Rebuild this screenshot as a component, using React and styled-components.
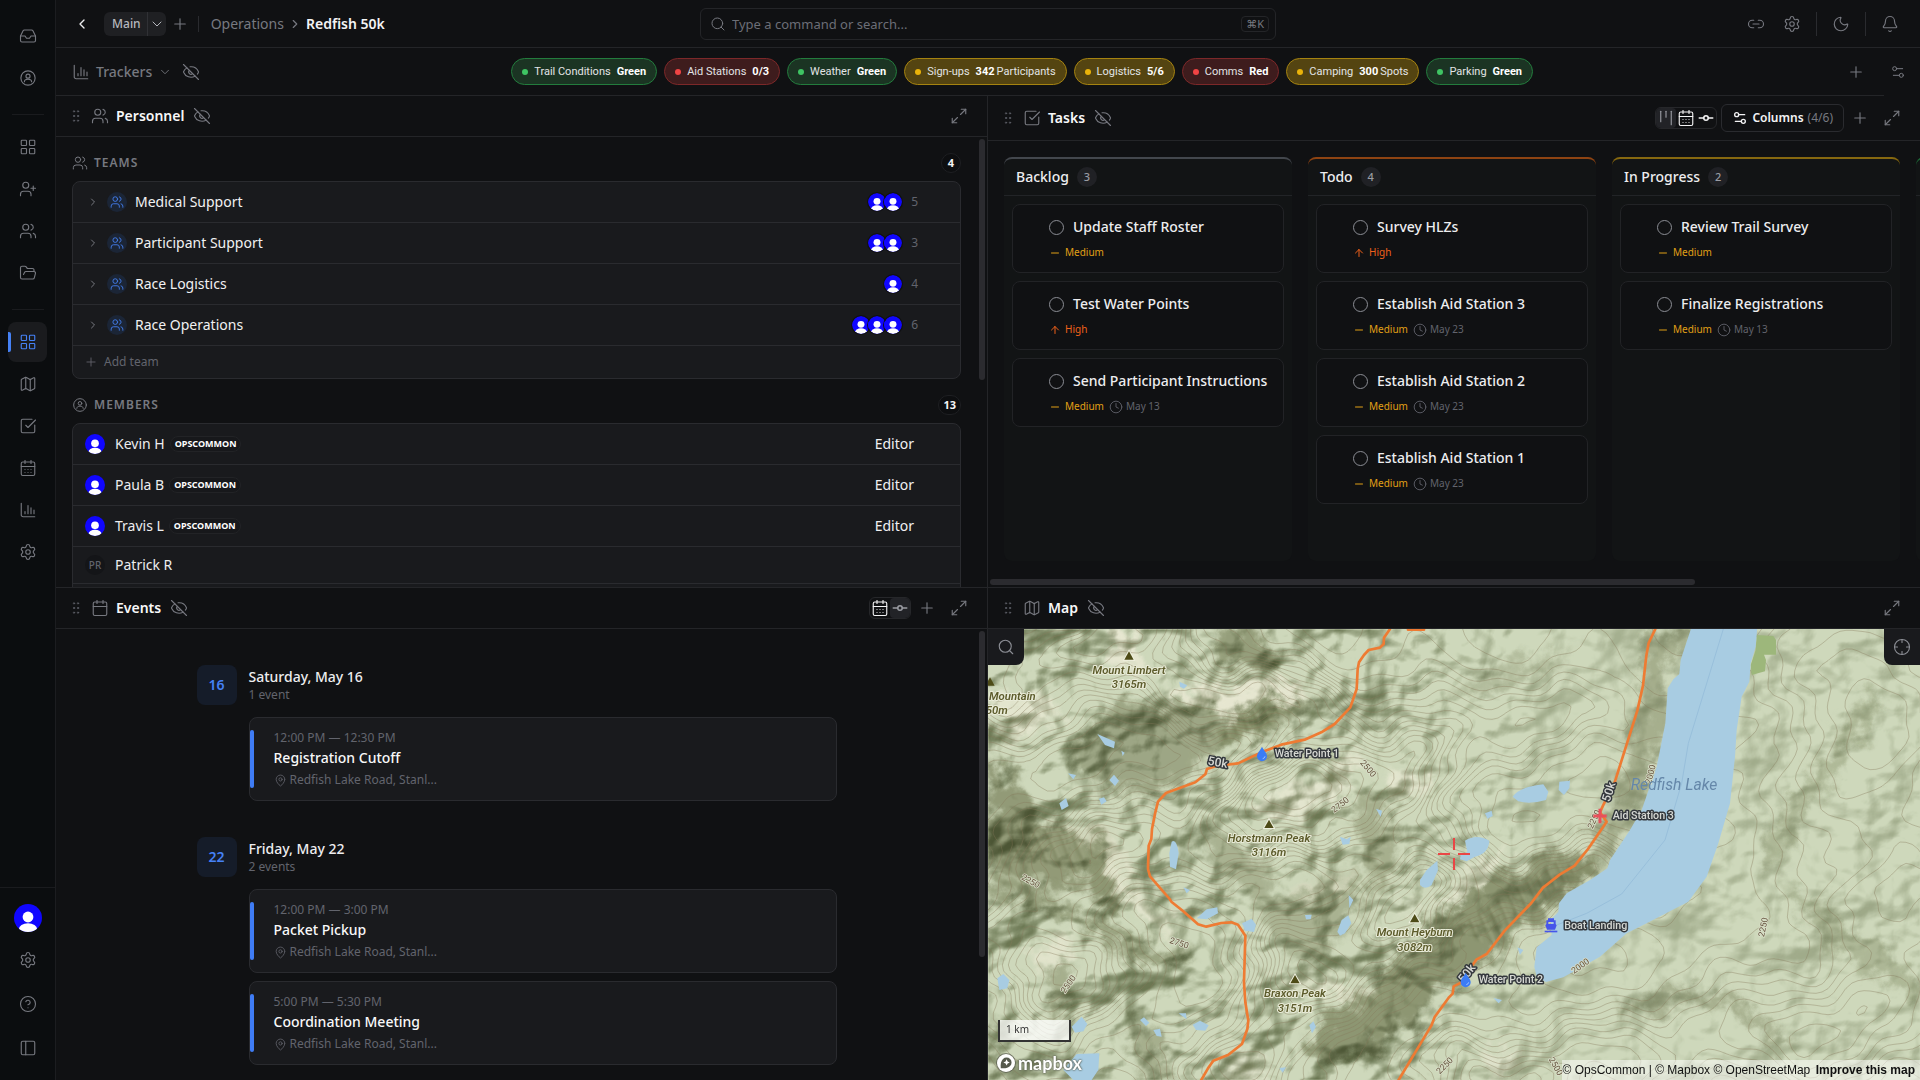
import styled, { createGlobalStyle, css } from 'styled-components';
import {
    ArrowUp, Bell, Calendar, CalendarDays, ChevronDown, ChevronLeft, ChevronRight, CircleHelp, Clock, Crosshair,
    EyeOff, FolderOpen, GitCommitHorizontal, GripVertical, Inbox, Kanban, LayoutGrid, Link2, Map, MapPin, Maximize2,
    Minus, Moon, PanelLeft, Plus, Search, Settings, Settings2, SquareCheckBig, UserPlus, Users,
} from 'lucide-react';

const GlobalStyle = createGlobalStyle`
    * { box-sizing: border-box; }
    body {
        margin: 0;
        background: #101113;
        color: #ededef;
        font-family: 'Noto Sans', 'Liberation Sans', sans-serif;
        font-size: 14px;
        line-height: 20px;
    }
    button, input { font: inherit; color: inherit; }
    a { color: inherit; text-decoration: none; }
    h1, h2, h3, p, ul { margin: 0; padding: 0; font: inherit; }
    ul { list-style: none; }
    svg { display: block; flex-shrink: 0; }
`

const CircleUser = ({ size = 18 }) => (
    <svg width={size} height={size} viewBox="0 0 24 24" fill="none" stroke="currentColor" strokeWidth="1.5" strokeLinecap="round">
        <circle cx="12" cy="12" r="9.500" />
        <circle cx="12" cy="9.500" r="2.700" />
        <path d="M7.200 17c0-2.200 2-3.300 4.800-3.300s4.800 1.100 4.800 3.300" />
    </svg>
)

const ChartIcon = ({ size = 18 }) => (
    <svg width={size} height={size} viewBox="0 0 24 24" fill="none" stroke="currentColor" strokeWidth="1.5" strokeLinecap="round">
        <path d="M3 3v15.500A2.500 2.500 0 0 0 5.500 21H21M8 17v-3M12 17V6M16 17V9M20 17v-5" />
    </svg>
)

const Avatar = ({ size = 20 }) => (
    <svg width={size} height={size} viewBox="0 0 28 28" role="img" aria-label="avatar">
        <clipPath id={'avatar' + size}><circle cx="14" cy="14" r="14" /></clipPath>
        <g clipPath={`url(#avatar${size})`}>
            <rect width="28" height="28" fill="#1006ff" />
            <circle cx="14" cy="13" r="5.400" fill="#fff" />
            <ellipse cx="14" cy="25.500" rx="9.200" ry="6.300" fill="#fff" />
        </g>
    </svg>
)

const ICON = { size: 18, strokeWidth: 1.5 };

/* ---------- sidebar ---------- */

const PROJECT_LINKS = [
    { label: 'Overview', icon: LayoutGrid, active: true },
    { label: 'Map', icon: Map },
    { label: 'Tasks', icon: SquareCheckBig },
    { label: 'Calendar', icon: CalendarDays },
    { label: 'Trackers', icon: ChartIcon },
    { label: 'Settings', icon: Settings },
];
const ORG_LINKS = [
    { label: 'Dashboard', icon: LayoutGrid },
    { label: 'Invite', icon: UserPlus },
    { label: 'People', icon: Users },
    { label: 'Files', icon: FolderOpen },
];
const TOP_LINKS = [
    { label: 'Inbox', icon: Inbox },
    { label: 'Profile', icon: CircleUser },
];

const NavGroup = ({ links }) => (
    <NavList>
        {links.map(({ label, icon: Icon, active }) => (
            <li key={label}>
                <NavLink href="#" aria-label={label} $active={active}><Icon {...ICON} /></NavLink>
            </li>
        ))}
    </NavList>
)

const Sidebar = () => (
    <SidebarStyle>
        <NavGroup links={TOP_LINKS} />
        <NavDivider />
        <NavGroup links={ORG_LINKS} />
        <NavDivider />
        <NavGroup links={PROJECT_LINKS} />
        <SidebarFooter>
            <AccountLink href="#" aria-label="Account"><Avatar size={28} /></AccountLink>
            <NavLink href="#" aria-label="Preferences"><Settings {...ICON} /></NavLink>
            <NavLink href="#" aria-label="Help"><CircleHelp {...ICON} /></NavLink>
            <NavLink href="#" aria-label="Toggle sidebar"><PanelLeft {...ICON} /></NavLink>
        </SidebarFooter>
    </SidebarStyle>
)

/* ---------- top bars ---------- */

const TopBar = () => (
    <TopBarStyle>
        <TopLeft>
            <IconButton aria-label="Back" $bright><ChevronLeft size={16} strokeWidth={2} /></IconButton>
            <ViewPicker>
                <button>Main</button>
                <button aria-label="Choose view"><ChevronDown size={16} strokeWidth={1.5} /></button>
            </ViewPicker>
            <IconButton aria-label="Add view"><Plus {...ICON} /></IconButton>
            <Rule />
            <Crumbs aria-label="Breadcrumb">
                <a href="#">Operations</a>
                <ChevronRight size={14} strokeWidth={2} />
                <h1>Redfish 50k</h1>
            </Crumbs>
        </TopLeft>
        <SearchBox>
            <Search size={16} strokeWidth={1.5} />
            <input type="text" aria-label="Search" placeholder="Type a command or search..." />
            <kbd>⌘K</kbd>
        </SearchBox>
        <TopRight>
            <IconButton aria-label="Copy link"><Link2 {...ICON} /></IconButton>
            <IconButton aria-label="Settings"><Settings {...ICON} /></IconButton>
            <Rule $tall />
            <IconButton aria-label="Theme"><Moon {...ICON} /></IconButton>
            <Rule $tall />
            <IconButton aria-label="Notifications"><Bell {...ICON} /></IconButton>
        </TopRight>
    </TopBarStyle>
)

const TRACKERS = [
    { label: 'Trail Conditions', value: 'Green', tone: 'green' },
    { label: 'Aid Stations', value: '0/3', tone: 'red' },
    { label: 'Weather', value: 'Green', tone: 'green' },
    { label: 'Sign-ups', value: '342', unit: 'Participants', tone: 'yellow' },
    { label: 'Logistics', value: '5/6', tone: 'yellow' },
    { label: 'Comms', value: 'Red', tone: 'red' },
    { label: 'Camping', value: '300', unit: 'Spots', tone: 'yellow' },
    { label: 'Parking', value: 'Green', tone: 'green' },
];

const TrackerBar = () => (
    <TrackerRow>
        <TrackerMain>
            <TrackerTitle>
                <ChartIcon />
                <h2>Trackers</h2>
                <ChevronDown size={14} strokeWidth={1.5} />
                <EyeOff {...ICON} />
            </TrackerTitle>
            <Pills>
                {TRACKERS.map((t) => (
                    <Pill key={t.label} $tone={t.tone}>
                        <span>{t.label}</span>
                        <PillValue><b>{t.value}</b>{t.unit && <span>{t.unit}</span>}</PillValue>
                    </Pill>
                ))}
            </Pills>
            <IconButton aria-label="Add tracker"><Plus {...ICON} /></IconButton>
        </TrackerMain>
        <TrackerSettings aria-label="Layout settings"><Settings2 size={16} strokeWidth={1.5} /></TrackerSettings>
    </TrackerRow>
)

/* ---------- panels ---------- */

const Panel = ({ title, icon: Icon, tall, actions, children }) => (
    <PanelStyle>
        <PanelHeader $tall={tall}>
            <Grip><GripVertical size={16} strokeWidth={1.5} /></Grip>
            <Icon {...ICON} />
            <h2>{title}</h2>
            <EyeOff {...ICON} />
            <PanelActions>
                {actions}
                <IconButton aria-label={'Expand ' + title}><Maximize2 {...ICON} /></IconButton>
            </PanelActions>
        </PanelHeader>
        {children}
    </PanelStyle>
)

const TEAMS = [
    { name: 'Medical Support', avatars: 2, count: 5 },
    { name: 'Participant Support', avatars: 2, count: 3 },
    { name: 'Race Logistics', avatars: 1, count: 4 },
    { name: 'Race Operations', avatars: 3, count: 6 },
];
const MEMBERS = [
    { name: 'Kevin H', org: 'OPSCOMMON', role: 'Editor' },
    { name: 'Paula B', org: 'OPSCOMMON', role: 'Editor' },
    { name: 'Travis L', org: 'OPSCOMMON', role: 'Editor' },
    { name: 'Patrick R', initials: 'PR' },
];

const Personnel = () => (
    <Panel title="Personnel" icon={Users}>
        <ScrollArea>
            <PeopleContent>
                <SectionHead><Users size={16} strokeWidth={1.5} /><h3>TEAMS</h3><Count>4</Count></SectionHead>
                <List>
                    {TEAMS.map((t) => (
                        <TeamRow key={t.name}>
                            <ChevronRight size={12} strokeWidth={2} />
                            <TeamIcon><Users size={14} strokeWidth={1.5} /></TeamIcon>
                            <span>{t.name}</span>
                            <AvatarStack>
                                {Array.from({ length: t.avatars }, (_, i) => <Avatar key={i} size={18} />)}
                            </AvatarStack>
                            <small>{t.count}</small>
                        </TeamRow>
                    ))}
                    <li><AddTeam><Plus size={14} strokeWidth={1.5} />Add team</AddTeam></li>
                </List>
                <SectionHead><CircleUser size={16} /><h3>MEMBERS</h3><Count>13</Count></SectionHead>
                <List>
                    {MEMBERS.map((m) => (
                        <MemberRow key={m.name} $short={!m.org}>
                            {m.initials ? <Initials>{m.initials}</Initials> : <Avatar />}
                            <span>{m.name}</span>
                            {m.org && <OrgBadge>{m.org}</OrgBadge>}
                            {m.role && <Role>{m.role}</Role>}
                        </MemberRow>
                    ))}
                    <MemberRow $short />
                </List>
            </PeopleContent>
            <Track><Thumb $size={54} /></Track>
        </ScrollArea>
    </Panel>
)

const COLUMNS = [
    {
        name: 'Backlog', color: '#43474d', tasks: [
            { title: 'Update Staff Roster', priority: 'Medium' },
            { title: 'Test Water Points', priority: 'High' },
            { title: 'Send Participant Instructions', priority: 'Medium', due: 'May 13' },
        ],
    },
    {
        name: 'Todo', color: '#8e4312', tasks: [
            { title: 'Survey HLZs', priority: 'High' },
            { title: 'Establish Aid Station 3', priority: 'Medium', due: 'May 23' },
            { title: 'Establish Aid Station 2', priority: 'Medium', due: 'May 23' },
            { title: 'Establish Aid Station 1', priority: 'Medium', due: 'May 23' },
        ],
    },
    {
        name: 'In Progress', color: '#86680f', tasks: [
            { title: 'Review Trail Survey', priority: 'Medium' },
            { title: 'Finalize Registrations', priority: 'Medium', due: 'May 13' },
        ],
    },
    { color: '#1d6b38', tasks: [] },
];

const TaskCard = ({ title, priority, due }) => (
    <Card>
        <CardTitle>
            <input type="checkbox" aria-label={'Complete ' + title} />
            <h3>{title}</h3>
        </CardTitle>
        <CardMeta>
            <Priority $high={priority === 'High'}>
                {priority === 'High' ? <ArrowUp size={12} strokeWidth={2} /> : <Minus size={12} strokeWidth={2} />}
                {priority}
            </Priority>
            {due && <Due><Clock size={14} strokeWidth={1.5} />{due}</Due>}
        </CardMeta>
    </Card>
)

const Tasks = () => (
    <Panel
        title="Tasks"
        icon={SquareCheckBig}
        tall
        actions={<>
            <Segmented>
                <Segment aria-label="Board" $on><Kanban size={18} strokeWidth={1.5} /></Segment>
                <Segment aria-label="Calendar"><CalendarDays size={18} strokeWidth={1.5} /></Segment>
                <Segment aria-label="Timeline"><GitCommitHorizontal size={18} strokeWidth={2} /></Segment>
            </Segmented>
            <ColumnsButton><Settings2 size={16} strokeWidth={2} />Columns <span>(4/6)</span></ColumnsButton>
            <IconButton aria-label="Add task"><Plus {...ICON} /></IconButton>
        </>}
    >
        <Board>
            {COLUMNS.map((c) => (
                <Column key={c.color} $color={c.color}>
                    <ColumnHead>
                        {c.name && <><h3>{c.name}</h3><ColumnCount>{c.tasks.length}</ColumnCount></>}
                    </ColumnHead>
                    <Cards>{c.tasks.map((t) => <TaskCard key={t.title} {...t} />)}</Cards>
                </Column>
            ))}
        </Board>
        <Track $horizontal><Thumb $horizontal $size={76} /></Track>
    </Panel>
)

const DAYS = [
    {
        day: 16, title: 'Saturday, May 16', note: '1 event', events: [
            { time: '12:00 PM — 12:30 PM', name: 'Registration Cutoff' },
        ],
    },
    {
        day: 22, title: 'Friday, May 22', note: '2 events', events: [
            { time: '12:00 PM — 3:00 PM', name: 'Packet Pickup' },
            { time: '5:00 PM — 5:30 PM', name: 'Coordination Meeting' },
        ],
    },
];

const Events = () => (
    <Panel
        title="Events"
        icon={Calendar}
        actions={<>
            <Segmented>
                <Segment aria-label="Calendar"><CalendarDays size={18} strokeWidth={1.5} /></Segment>
                <Segment aria-label="Timeline" $on><GitCommitHorizontal size={18} strokeWidth={2} /></Segment>
            </Segmented>
            <IconButton aria-label="Add event"><Plus {...ICON} /></IconButton>
        </>}
    >
        <ScrollArea>
            <Timeline>
                {DAYS.map((d) => (
                    <Day key={d.day}>
                        <DayBadge>{d.day}</DayBadge>
                        <DayBody>
                            <DayHead><h3>{d.title}</h3><p>{d.note}</p></DayHead>
                            {d.events.map((e) => (
                                <EventCard key={e.name}>
                                    <p>{e.time}</p>
                                    <h3>{e.name}</h3>
                                    <p><MapPin size={13} strokeWidth={1.5} />Redfish Lake Road, Stanl...</p>
                                </EventCard>
                            ))}
                        </DayBody>
                    </Day>
                ))}
            </Timeline>
            <Track><Thumb $size={73} /></Track>
        </ScrollArea>
    </Panel>
)

/* ---------- map ---------- */

const MAP_W = 2796;
const MAP_H = 1353;

// x, y, height, spread x, spread y
const SUMMITS = [
    [400, 30, 9, 260, 150], [0, 180, 8, 200, 200], [740, 210, 8, 330, 110], [860, 560, 11, 260, 180],
    [1060, 420, 7, 170, 150], [1290, 430, 7, 150, 170], [1270, 860, 10, 200, 190], [930, 1040, 9, 200, 190],
    [330, 660, 8, 280, 150], [190, 1020, 9, 230, 200], [760, 1330, 7, 240, 150], [1560, 1360, 8, 250, 160],
    [1720, 760, 6, 340, 100], [1650, 260, 4, 300, 120], [2640, 250, 5, 330, 520], [2500, 1200, 6, 420, 190],
    [1940, 1280, 4, 200, 130], [2760, 830, 4, 240, 200],
];

const elevation = (x, y) => {
    const wx = x + 30 * Math.sin(y / 61) + 16 * Math.sin(y / 23 + x / 47);
    const wy = y + 30 * Math.sin(x / 73 + 2) + 14 * Math.cos(x / 29 - y / 53);
    return SUMMITS.reduce(
        (sum, [px, py, h, sx, sy]) => sum + h * Math.exp(-(((wx - px) / sx) ** 2) - ((wy - py) / sy) ** 2),
        0.5 * Math.sin(x / 90) * Math.cos(y / 110)
    );
};

// marching squares over the elevation grid
const buildContours = (step, interval) => {
    const cols = Math.ceil(MAP_W / step) + 1;
    const rows = Math.ceil(MAP_H / step) + 1;
    const grid = Array.from({ length: rows }, (_, r) => Array.from({ length: cols }, (_, c) => elevation(c * step, r * step)));
    let d = '';
    for (let r = 0; r < rows - 1; r++) {
        for (let c = 0; c < cols - 1; c++) {
            const corners = [[c, r], [c + 1, r], [c + 1, r + 1], [c, r + 1]];
            const heights = corners.map(([i, j]) => grid[j][i]);
            const first = Math.ceil(Math.min(...heights) / interval);
            const last = Math.floor(Math.max(...heights) / interval);
            for (let n = first; n <= last; n++) {
                const level = n * interval;
                const hits = [];
                for (let e = 0; e < 4; e++) {
                    const a = heights[e];
                    const b = heights[(e + 1) % 4];
                    if ((a < level) === (b < level)) continue;
                    const t = (level - a) / (b - a);
                    const [x1, y1] = corners[e];
                    const [x2, y2] = corners[(e + 1) % 4];
                    hits.push(`${Math.round((x1 + (x2 - x1) * t) * step)} ${Math.round((y1 + (y2 - y1) * t) * step)}`);
                }
                if (hits.length >= 2) d += `M${hits[0]}L${hits[1]}`;
                if (hits.length === 4) d += `M${hits[2]}L${hits[3]}`;
            }
        }
    }
    return d;
};

const CONTOURS = buildContours(18, 0.6);

const PEAKS = [
    { name: 'Mount Limbert', height: '3165m', x: 423, y: 82 },
    { name: 'Horstmann Peak', height: '3116m', x: 843, y: 587 },
    { name: 'Mount Heyburn', height: '3082m', x: 1280, y: 870 },
    { name: 'Braxon Peak', height: '3151m', x: 921, y: 1053 },
];
const CONTOUR_LABELS = [
    { text: '2500', x: 1134, y: 424, angle: 50 }, { text: '2750', x: 1062, y: 534, angle: -38 },
    { text: '2250', x: 124, y: 764, angle: 28 }, { text: '2750', x: 571, y: 950, angle: 18 },
    { text: '2500', x: 248, y: 1070, angle: -55 }, { text: '2250', x: 1376, y: 1316, angle: -45 },
    { text: '2000', x: 1996, y: 438, angle: -75 }, { text: '2000', x: 1782, y: 1018, angle: -35 },
    { text: '2250', x: 2334, y: 896, angle: -78 }, { text: '2250', x: 1826, y: 574, angle: -65 },
    { text: '2500', x: 1696, y: 1316, angle: 60 },
];
const PLACES = [
    { name: 'Water Point 1', x: 860, y: 383 },
    { name: 'Aid Station 3', x: 1874, y: 570 },
    { name: 'Boat Landing', x: 1729, y: 901 },
    { name: 'Water Point 2', x: 1472, y: 1061 },
];

const Drop = ({ x, y }) => (
    <g transform={`translate(${x} ${y})`}>
        <path d="M0-22C6-10 15-3 15 7A15 15 0 0 1-15 7C-15-3-6-10 0-22Z" fill="#3b7cf6" />
        <path d="M2 14q6-1 7-7" fill="none" stroke="#9dc0ff" strokeWidth="3" />
    </g>
)

const MapView = () => (
    <MapSvg viewBox={`0 0 ${MAP_W} ${MAP_H}`} preserveAspectRatio="xMidYMid slice" role="img" aria-label="Course map">
        <defs>
            <filter id="relief" x="0" y="0" width="100%" height="100%" colorInterpolationFilters="sRGB">
                <feTurbulence type="fractalNoise" baseFrequency="0.0035 0.0045" numOctaves="4" seed="23" />
                <feDiffuseLighting surfaceScale="120" diffuseConstant="1.2" lightingColor="#fff">
                    <feDistantLight azimuth="225" elevation="56" />
                </feDiffuseLighting>
                <feColorMatrix values="0.62 0 0 0 0.4  0.58 0 0 0 0.44  0.72 0 0 0 0.3  0 0 0 1 0" />
            </filter>
            <filter id="rugged" x="-10%" y="-10%" width="120%" height="120%" colorInterpolationFilters="sRGB">
                <feTurbulence type="fractalNoise" baseFrequency="0.016" numOctaves="4" seed="4" result="n" />
                <feGaussianBlur in="SourceGraphic" stdDeviation="12" result="b" />
                <feDisplacementMap in="b" in2="n" scale="120" xChannelSelector="R" yChannelSelector="G" />
            </filter>
            <linearGradient id="westward" x1="0" x2="1" y1="0" y2="0">
                <stop offset="0.45" stopColor="#fff" stopOpacity="0.8" />
                <stop offset="0.62" stopColor="#fff" stopOpacity="0.32" />
                <stop offset="1" stopColor="#fff" stopOpacity="0.4" />
            </linearGradient>
            <mask id="reliefMask"><rect width={MAP_W} height={MAP_H} fill="url(#westward)" /></mask>
            <pattern id="gullies" width="34" height="120" patternUnits="userSpaceOnUse" patternTransform="rotate(-24)">
                <path d="M8 0q10 60 0 120" stroke="#59603a" strokeWidth="9" fill="none" opacity="0.5" />
                <path d="M22 0q-6 60 0 120" stroke="#d6dab8" strokeWidth="5" fill="none" opacity="0.35" />
            </pattern>
            <filter id="soft"><feGaussianBlur stdDeviation="3" /></filter>
        </defs>
        <rect width={MAP_W} height={MAP_H} fill="#ced8bb" />
        <g filter="url(#rugged)">
            <g fill="#7d8660">
                <path opacity="0.7" d="M656 3H816L880 115 700 130Z" />
                <path opacity="0.6" d="M276 323 376 223 536 223 716 253 956 193 1016 213 876 303 676 363 536 483 356 483 226 383Z" />
                <path opacity="0.7" d="M716 253 956 193 850 300 680 345Z" />
                <path opacity="0.75" d="M0 383 106 473 176 583 376 623 276 753 196 773 0 713Z" />
                <path opacity="0.8" d="M286 703 376 653 376 723 406 863 316 823Z" />
                <path opacity="0.65" d="M0 723 176 783 306 863 496 953 636 973 536 1013 436 1003 276 883 0 803Z" />
                <path opacity="0.45" d="M640 560 800 680 890 800 1080 720 1140 800 1080 900 960 1000 860 940 800 820 640 680Z" />
                <path opacity="0.5" d="M1100 480 1180 520 1230 720 1180 800 1120 700Z" />
                <path opacity="0.8" d="M1296 883 1480 780 1700 660 1830 690 1830 720 1716 820 1500 1000 1376 1083 1256 1203 1096 1303 936 1263 996 1193 1076 1133 1216 1003Z" />
                <path opacity="0.5" d="M1976 3H2106L2036 153 2026 323 1956 543 1856 703 1736 783 1676 763 1776 693 1856 573 1916 383 1956 153Z" />
                <path opacity="0.5" d="M180 1030 260 1000 230 1200 180 1160ZM380 1130 500 1200 560 1353H480Z" />
                <path opacity="0.5" d="M1896 1133 2116 1063 2256 1113 2356 1183 2436 1273 2256 1163 2100 1110 1920 1170Z" />
                <path opacity="0.4" d="M2330 620 2480 430 2640 190 2680 230 2500 480 2350 740Z" />
                <path opacity="0.4" d="M2380 730 2500 840 2700 960 2796 1070V1120L2600 1010 2440 860Z" />
                <path opacity="0.35" d="M1370 180 1560 110 1760 50 1700 120 1480 200Z" />
            </g>
            <g fill="#e9e8d3">
                <path opacity="0.9" d="M336 3H476L446 73 536 203 716 248 966 183 900 150 700 180 520 170 400 110Z" />
                <path opacity="0.8" d="M0 200 160 190 220 280 110 330 0 300Z" />
                <path opacity="0.8" d="M750 520 900 480 1000 450 1130 310 1080 480 960 560 870 590Z" />
                <path opacity="0.8" d="M1200 420 1290 410 1340 470 1260 530Z" />
                <path opacity="0.8" d="M1220 800 1300 860 1480 700 1560 650 1500 770 1360 830 1280 870Z" />
                <path opacity="0.7" d="M150 570 380 620 430 760 560 900 530 920 390 790 330 640Z" />
                <path opacity="0.7" d="M160 960 260 920 240 1000 150 1030Z" />
                <path opacity="0.7" d="M900 790 1090 730 1040 790 920 810ZM780 1000 930 1040 1080 1080 1190 1070 1060 1120Z" />
                <path opacity="0.6" d="M700 1310 800 1250 830 1353H740ZM1480 1250 1600 1270 1580 1353H1500Z" />
            </g>
        </g>
        <g filter="url(#soft)" opacity="0.5" fill="url(#gullies)">
            <path d="M726 258 946 208 880 290 710 335ZM1400 900 1700 700 1790 710 1500 950ZM60 580 340 640 270 730 80 680Z" />
        </g>
        <g mask="url(#reliefMask)" style={{ mixBlendMode: 'multiply' }}>
            <rect width={MAP_W} height={MAP_H} filter="url(#relief)" />
        </g>
        <path d={CONTOURS} fill="none" stroke="#85785a" strokeWidth="2.500" opacity="0.45" />

        <g transform="translate(1356 -177)">
            <path fill="#9db77b" d="M950 195 1000 198 1008 210V254H972L978 270 975 304 935 315 932 285 947 240Z" />
            <path
                fill="#a8cce2"
                d="M755 170 735 230 722 270 718 312 700 328 683 355 676 460 650 590 605 720 570 780 510 870 502 895 450 930 380 970 357 1000 355 1025 332 1050 335 1095 290 1132 283 1190 290 1220 318 1236 370 1222 480 1160 560 1090 620 1060 745 995 800 920 835 820 870 700 885 560 890 480 905 380 928 335 932 280 947 230 952 170Z"
            />
            <path fill="none" stroke="#98bfdb" strokeWidth="3" d="M850 177 745 520 725 640 675 810 545 972 440 1030 350 1065" />
            <path fill="#a8cce2" d="M218 680Q240 650 310 643L325 665 318 690Q270 704 235 694ZM358 635 390 632 388 655 372 675 356 660ZM135 730 155 722 158 738 142 746ZM75 812Q110 790 148 812 146 850 105 860L80 874 60 868 62 856 82 846ZM232 1132 250 1140 240 1154ZM160 1284 186 1290 176 1300Z" />
        </g>
        <g transform="translate(-24 -177)" fill="#a8cce2">
            <path d="M575 815Q590 805 596 850L588 898 570 890 568 850ZM1320 930 1340 900 1372 872 1374 900 1355 945Q1335 962 1320 945ZM1072 1085 1085 1050 1105 1036 1114 1060 1095 1090 1080 1097ZM650 1045 680 1018 712 1012 714 1030 680 1048ZM786 1060 815 1046 828 1064 822 1086 795 1082Z" />
            <path d="M250 1500 290 1452 358 1450 355 1500 335 1530H280ZM275 1370 305 1340 322 1362 310 1384 285 1388ZM52 1225 70 1212 88 1230 82 1255 58 1260ZM352 492 405 515 402 535 375 525ZM388 630 402 614 417 632 405 648ZM238 700 258 684 266 708 245 720ZM357 686 372 682 380 694 364 704ZM598 335 622 346 612 356 600 350Z" />
            <path d="M638 1364 660 1352 686 1366 676 1382 648 1380ZM988 1366 1000 1354 1008 1370 996 1390ZM480 1350 492 1342 508 1358 498 1368ZM520 1380 540 1376 545 1400 530 1398ZM596 1330 618 1330 620 1348ZM1080 800 1100 808 1112 800 1108 822 1088 824ZM1188 716 1206 722 1202 740ZM1106 975 1120 990 1108 1015ZM975 1035 995 1034 992 1048 978 1048ZM610 952 630 960 620 970ZM898 1494 918 1492 908 1508ZM264 610 288 615 280 628ZM424 542 434 548 428 558Z" />
        </g>

        <g fill="none" stroke="#ee7b33" strokeWidth="8" strokeLinejoin="round" strokeLinecap="round">
            <path d="M1206 0 1188 26 1187 45 1176 56 1142 63 1128 78 1113 100 1109 120 1106 180 1087 235 1040 285 1000 310 950 332 880 347 820 370 750 403 685 411 657 420 652 436 622 460 534 492 510 518 502 550 492 600 490 630 482 650 480 720 486 742 545 810 550 818 585 846 630 886 655 893 700 882 730 880 750 887 772 920 768 1060 772 1120 781 1175 778 1200 762 1245 720 1278 676 1295 660 1318 638 1356" />
            <path d="M2002 0 1982 42 1975 80 1965 170 1948 245 1880 460 1845 530 1836 550 1856 578 1800 660 1760 710 1715 737 1665 776 1630 822 1550 905 1496 975 1465 992 1452 1010M1430 1055 1397 1072 1394 1094 1382 1106 1340 1164 1330 1190 1230 1356" />
            <path d="M1260 2h48" />
        </g>

        <MapText $kind="route" transform="translate(687 412) rotate(10)">50k</MapText>
        <MapText $kind="route" transform="translate(1874 492) rotate(-72)">50k</MapText>
        <MapText $kind="route" transform="translate(1446 1040) rotate(-52)">50k</MapText>

        {CONTOUR_LABELS.map((l) => (
            <MapText key={l.x} $kind="contour" transform={`translate(${l.x} ${l.y}) rotate(${l.angle})`}>{l.text}</MapText>
        ))}
        {PEAKS.map((p) => (
            <g key={p.name}>
                <path d={`M${p.x} ${p.y - 15}l14 25h-28z`} fill="#4d4b17" stroke="#eff0df" strokeWidth="6" paintOrder="stroke" />
                <MapText $kind="peak" x={p.x} y={p.y + 52}>{p.name}</MapText>
                <MapText $kind="peak" x={p.x} y={p.y + 95}>{p.height}</MapText>
            </g>
        ))}
        <path d="M6 145l14 25h-28z" fill="#4d4b17" />
        <MapText $kind="peak" x="73" y="212">Mountain</MapText>
        <MapText $kind="peak" x="26" y="255">50m</MapText>
        <MapText $kind="lake" x="2058" y="484">Redfish Lake</MapText>

        <Drop x={822} y={375} />
        <Drop x={1433} y={1053} />
        <path d="M1836 539v44M1816 561h40" stroke="#e8505b" strokeWidth="9" />
        <g transform="translate(1689 888)" fill="#4655ea">
            <path d="M-9-20H9V-14H14V-3L17 1 12 14H-12L-17 1-14-3V-14H-9ZM-8-9V-3H8V-9Z" fillRule="evenodd" />
            <path d="M-19 17H19V22H-19Z" />
        </g>
        {PLACES.map((p) => <MapText key={p.name} $kind="place" x={p.x} y={p.y}>{p.name}</MapText>)}

        <path d="M1398 627v36M1398 687v36M1350 675h36M1410 675h36" stroke="#ea4646" strokeWidth="6" />
    </MapSvg>
)

const MapPanel = () => (
    <Panel title="Map" icon={Map}>
        <MapArea>
            <MapView />
            <MapButton aria-label="Search the map"><Search size={18} strokeWidth={1.5} /></MapButton>
            <MapButton aria-label="Centre the map" $right><Crosshair size={18} strokeWidth={1.5} /></MapButton>
            <MapFooter>
                <div>
                    <ScaleBar>1 km</ScaleBar>
                    <MapLogo href="#">
                        <svg width="20" height="20" viewBox="0 0 20 20" aria-hidden="true">
                            <circle cx="10" cy="10" r="10" fill="#55594c" opacity="0.7" />
                            <circle cx="10" cy="10" r="9" fill="#fff" />
                            <path d="M4.800 15.200C4.300 11 5 7.900 7 5.900a5 5 0 0 1 7.100 7.100c-2 2-5.100 2.700-9.300 2.200Z" fill="#55594c" />
                            <path d="M10.600 6.200l1 2.200 2.200 1-2.200 1-1 2.200-1-2.200-2.200-1 2.200-1Z" fill="#fff" />
                        </svg>
                        mapbox
                    </MapLogo>
                </div>
                <Attribution>
                    <a href="#">© OpsCommon</a> | <a href="#">© Mapbox</a> <a href="#">© OpenStreetMap</a>{' '}
                    <a href="#"><b>Improve this map</b></a>
                </Attribution>
            </MapFooter>
        </MapArea>
    </Panel>
)

const App = () => {
    return (
        <AppStyle>
            <GlobalStyle />
            <Sidebar />
            <Main>
                <TopBar />
                <TrackerBar />
                <PanelGrid>
                    <Personnel />
                    <Tasks />
                    <Events />
                    <MapPanel />
                </PanelGrid>
            </Main>
        </AppStyle>
    )
}

/* ---------- styles ---------- */

const line = '#242528';
const muted = '#62646d';

const AppStyle = styled.div`
    display: flex;
    height: 100vh;
    overflow: hidden;
`
const Main = styled.main`
    flex: 1;
    min-width: 0;
    display: flex;
    flex-direction: column;
`
const SidebarStyle = styled.nav`
    width: 56px;
    flex-shrink: 0;
    display: flex;
    flex-direction: column;
    padding-top: 16px;
    background: #0b0d0f;
    border-right: 1px solid #1c1d20;
`
const NavList = styled.ul`
    display: flex;
    flex-direction: column;
    gap: 2px;
    && { padding: 0 8px; }
`
const NavLink = styled.a`
    position: relative;
    display: flex;
    align-items: center;
    justify-content: center;
    height: 40px;
    border-radius: 8px;
    color: #777980;
    ${(p) => p.$active && css`
        background: #1a1b1e;
        color: #4581f5;
        &::before {
            content: '';
            position: absolute;
            left: 0;
            top: 10px;
            bottom: 10px;
            width: 3px;
            border-radius: 0 2px 2px 0;
            background: #4581f5;
        }
    `}
`
const AccountLink = styled(NavLink)`
    height: 36px;
`
const NavDivider = styled.hr`
    width: 32px;
    margin: 16px auto 12px 12px;
    border: 0;
    border-top: 1px solid #1a1b1e;
`
const SidebarFooter = styled.div`
    display: flex;
    flex-direction: column;
    gap: 4px;
    margin-top: auto;
    padding: 12px 8px;
    border-top: 1px solid #1a1b1e;
`
const IconButton = styled.button`
    display: flex;
    align-items: center;
    justify-content: center;
    width: 24px;
    height: 24px;
    padding: 0;
    border: 0;
    background: none;
    color: ${(p) => (p.$bright ? '#ededef' : '#777980')};
`
const TopBarStyle = styled.header`
    display: grid;
    grid-template-columns: 1fr minmax(0, 576px) 1fr;
    align-items: center;
    height: 48px;
    flex-shrink: 0;
    border-bottom: 1px solid ${line};
`
const TopLeft = styled.div`
    display: flex;
    align-items: center;
    padding-left: 14px;
    ${IconButton}:first-child { margin-right: 10px; }
`
const TopRight = styled.div`
    display: flex;
    align-items: center;
    justify-content: flex-end;
    gap: 12px;
    padding-right: 18px;
`
const Rule = styled.span`
    width: 1px;
    height: ${(p) => (p.$tall ? 24 : 16)}px;
    margin-left: ${(p) => (p.$tall ? 0 : 6)}px;
    background: #2a2b2f;
`
const ViewPicker = styled.div`
    display: flex;
    height: 24px;
    margin-right: 2px;
    border-radius: 6px;
    background: #1f2023;
    color: #b6b8be;
    font-size: 12px;
    font-weight: 500;
    button {
        display: flex;
        align-items: center;
        padding: 0 6px 0 8px;
        border: 0;
        background: none;
    }
    button + button {
        padding: 0 1px;
        border-left: 1px solid #303135;
    }
`
const Crumbs = styled.nav`
    display: flex;
    align-items: center;
    gap: 4px;
    padding-left: 12px;
    color: #777980;
    h1 { color: #f4f4f5; font-weight: 600; }
`
const SearchBox = styled.label`
    display: flex;
    align-items: center;
    gap: 6px;
    height: 32px;
    padding: 0 6px 0 9px;
    border: 1px solid ${line};
    border-radius: 6px;
    color: #777980;
    font-size: 13px;
    input {
        flex: 1;
        min-width: 0;
        padding: 0;
        border: 0;
        outline: 0;
        background: none;
    }
    input::placeholder { color: #6c6e77; }
    kbd {
        padding: 0 4px;
        border: 1px solid ${line};
        border-radius: 4px;
        font: 11px/14px 'Noto Sans', 'DejaVu Sans', sans-serif;
    }
`
const TrackerRow = styled.section`
    display: flex;
    height: 48px;
    flex-shrink: 0;
`
const TrackerMain = styled.div`
    flex: 1;
    display: flex;
    align-items: center;
    padding: 0 16px;
    border-bottom: 1px solid ${line};
`
const TrackerTitle = styled.div`
    display: flex;
    align-items: center;
    gap: 6px;
    color: #777980;
    font-weight: 500;
    svg:last-child { margin-left: 4px; }
`
const TrackerSettings = styled.button`
    display: flex;
    align-items: center;
    justify-content: center;
    width: 36px;
    padding: 0 8px 0 0;
    border: 0;
    background: none;
    color: #777980;
`
const Pills = styled.div`
    flex: 1;
    display: flex;
    justify-content: center;
    gap: 7px;
`
const TONES = {
    green: ['#1b3423', '#237c3d', '#3fc463'],
    red: ['#3e1c1d', '#7d2829', '#f04444'],
    yellow: ['#544411', '#a58310', '#eab30a'],
};
const Pill = styled.div`
    display: flex;
    align-items: center;
    gap: 6px;
    height: 27px;
    padding: 0 10px;
    border: 1px solid ${(p) => TONES[p.$tone][1]};
    border-radius: 14px;
    background: ${(p) => TONES[p.$tone][0]};
    color: #e3e4e6;
    font-family: Roboto, 'Liberation Sans', sans-serif;
    font-size: 11px;
    line-height: 16px;
    white-space: nowrap;
    &::before {
        content: '';
        width: 6px;
        height: 6px;
        border-radius: 3px;
        background: ${(p) => TONES[p.$tone][2]};
    }
`
const PillValue = styled.span`
    display: flex;
    gap: 2px;
    b { font-weight: 700; color: #fff; }
`
const PanelGrid = styled.div`
    flex: 1;
    min-height: 0;
    display: grid;
    grid-template-columns: repeat(2, minmax(0, 1fr));
    grid-template-rows: repeat(2, minmax(0, 1fr));
`
const PanelStyle = styled.section`
    display: flex;
    flex-direction: column;
    min-height: 0;
    overflow: hidden;
    &:nth-child(odd) { border-right: 1px solid ${line}; }
    &:nth-child(-n + 2) { border-bottom: 1px solid ${line}; }
`
const PanelHeader = styled.header`
    display: flex;
    align-items: center;
    gap: 7px;
    height: ${(p) => (p.$tall ? 45 : 41)}px;
    flex-shrink: 0;
    padding: 0 16px 0 12px;
    border-bottom: 1px solid ${line};
    color: #777980;
    h2 { margin-right: 2px; color: #f8f8f9; font-weight: 600; }
`
const Grip = styled.span`
    color: #5a5c64;
`
const PanelActions = styled.div`
    display: flex;
    align-items: center;
    gap: 4px;
    margin-left: auto;
    ${IconButton}:last-child { margin-left: 4px; }
`
const Segmented = styled.div`
    display: flex;
    height: 22px;
    border: 1px solid #26272a;
    border-radius: 6px;
    overflow: hidden;
`
const Segment = styled.button`
    display: flex;
    align-items: center;
    justify-content: center;
    width: 20px;
    padding: 0;
    border: 0;
    border-radius: 4px;
    background: ${(p) => (p.$on ? '#222327' : 'none')};
    color: ${(p) => (p.$on ? '#9a9ca3' : '#f4f4f5')};
`
const ColumnsButton = styled.button`
    display: flex;
    align-items: center;
    gap: 4px;
    height: 28px;
    padding: 0 10px;
    border: 1px solid #2a2b2f;
    border-radius: 6px;
    background: none;
    color: #f4f4f5;
    font-size: 12px;
    font-weight: 600;
    span { color: #777980; font-weight: 400; }
`
const ScrollArea = styled.div`
    flex: 1;
    min-height: 0;
    display: flex;
`
const Track = styled.div`
    flex-shrink: 0;
    padding: 2px;
    ${(p) => (p.$horizontal ? 'height: 10px;' : 'width: 10px;')}
`
const Thumb = styled.div`
    width: ${(p) => (p.$horizontal ? p.$size + '%' : '6px')};
    height: ${(p) => (p.$horizontal ? '6px' : p.$size + '%')};
    border-radius: 3px;
    background: #2b2b2f;
`
const PeopleContent = styled.div`
    flex: 1;
    padding: 16px;
    overflow: hidden;
`
const SectionHead = styled.div`
    display: flex;
    align-items: center;
    gap: 6px;
    height: 20px;
    margin-bottom: 8px;
    color: #777980;
    font-size: 12px;
    font-weight: 600;
    letter-spacing: 1px;
`
const Count = styled.span`
    min-width: 20px;
    margin-left: auto;
    padding: 0 4px;
    border: 1px solid #1e1f22;
    border-radius: 10px;
    background: #0d0e10;
    color: #f4f4f5;
    font-size: 11px;
    font-weight: 700;
    line-height: 18px;
    letter-spacing: 0;
    text-align: center;
`
const List = styled.ul`
    && { margin-bottom: 16px; }
    border: 1px solid #2a2b2f;
    border-radius: 8px;
    background: #191a1d;
    li + li { border-top: 1px solid #2a2b2f; }
`
const TeamRow = styled.li`
    display: flex;
    align-items: center;
    box-sizing: content-box;
    height: 40px;
    padding: 0 42px 0 12px;
    color: #f1f1f2;
    > svg { margin: 0 8px 0 2px; color: #777980; }
    small { width: 16px; color: ${muted}; font-size: 12px; text-align: right; }
`
const TeamIcon = styled.span`
    display: grid;
    place-items: center;
    width: 20px;
    height: 20px;
    margin-right: 8px;
    border-radius: 10px;
    background: #1b2536;
    color: #4581f5;
`
const AvatarStack = styled.span`
    display: flex;
    margin-left: auto;
    svg { border-radius: 9px; box-shadow: 0 0 0 1px #101113; }
    svg + svg { margin-left: -2px; }
`
const AddTeam = styled.button`
    display: flex;
    align-items: center;
    gap: 6px;
    width: 100%;
    height: 32px;
    padding: 0 11px;
    border: 0;
    background: none;
    color: ${muted};
    font-size: 12px;
`
const MemberRow = styled.li`
    display: flex;
    align-items: center;
    box-sizing: content-box;
    height: ${(p) => (p.$short ? 36 : 40)}px;
    padding: 0 46px 0 12px;
    > span:nth-child(2) { margin-left: 10px; }
`
const Initials = styled.span`
    width: 20px;
    border-radius: 10px;
    background: #141518;
    color: ${muted};
    font-size: 10px;
    font-weight: 500;
    text-align: center;
`
const OrgBadge = styled.span`
    margin-left: 5px;
    padding: 0 4px;
    border: 1px solid #222326;
    border-radius: 9px;
    background: #17181b;
    color: #fff;
    font-size: 9px;
    font-weight: 700;
    line-height: 14px;
`
const Role = styled.span`
    margin-left: auto;
    color: #f1f1f2;
`
const Board = styled.div`
    flex: 1;
    min-height: 0;
    display: flex;
    gap: 16px;
    padding: 16px;
    overflow: hidden;
`
const Column = styled.section`
    flex: 0 0 288px;
    border-top: 2px solid ${(p) => p.$color};
    border-radius: 8px;
    background: #121415;
`
const ColumnHead = styled.header`
    display: flex;
    align-items: center;
    gap: 8px;
    height: 37px;
    padding: 0 12px;
    border-bottom: 1px solid #222427;
    font-weight: 500;
`
const ColumnCount = styled.span`
    min-width: 20px;
    border-radius: 10px;
    background: #202125;
    color: #9a9ca3;
    font-size: 11px;
    font-weight: 500;
    text-align: center;
`
const Cards = styled.div`
    display: flex;
    flex-direction: column;
    gap: 8px;
    padding: 8px;
`
const Card = styled.article`
    padding: 12px 12px 12px 36px;
    border: 1px solid #222326;
    border-radius: 8px;
    background: #101113;
`
const CardTitle = styled.div`
    display: flex;
    align-items: center;
    gap: 9px;
    font-weight: 500;
    white-space: nowrap;
    input {
        appearance: none;
        width: 15px;
        height: 15px;
        margin: 0;
        border: 1px solid #8b8d94;
        border-radius: 8px;
    }
`
const CardMeta = styled.div`
    display: flex;
    gap: 5px;
    margin-top: 8px;
    font-size: 10px;
    line-height: 15px;
`
const Priority = styled.span`
    display: flex;
    align-items: center;
    gap: 4px;
    color: ${(p) => (p.$high ? '#f0611a' : '#e0a016')};
`
const Due = styled.span`
    display: flex;
    align-items: center;
    gap: 3px;
    color: ${muted};
`
const Timeline = styled.div`
    flex: 0 1 640px;
    min-width: 0;
    display: flex;
    flex-direction: column;
    gap: 36px;
    margin: 0 auto;
    padding: 36px 0;
`
const Day = styled.section`
    display: flex;
    gap: 12px;
`
const DayBadge = styled.span`
    display: grid;
    place-items: center;
    width: 40px;
    height: 40px;
    border-radius: 8px;
    background: #151c29;
    color: #4581f5;
    font-weight: 600;
`
const DayBody = styled.div`
    flex: 1;
    display: flex;
    flex-direction: column;
    gap: 8px;
`
const DayHead = styled.div`
    height: 40px;
    margin-bottom: 4px;
    padding-top: 2px;
    h3 { font-weight: 500; }
    p { color: ${muted}; font-size: 12px; line-height: 16px; }
`
const EventCard = styled.article`
    position: relative;
    padding: 12px 24px;
    border: 1px solid #2a2b2f;
    border-radius: 8px;
    background: #191a1d;
    &::before {
        content: '';
        position: absolute;
        left: 0;
        top: 12px;
        bottom: 12px;
        width: 4px;
        border-radius: 2px;
        background: #3f7cf5;
    }
    && h3 { margin: 2px 0 4px; color: #f8f8f9; font-weight: 500; }
    p {
        display: flex;
        align-items: center;
        gap: 3px;
        color: ${muted};
        font-size: 12px;
        line-height: 16px;
    }
`
const MapArea = styled.div`
    position: relative;
    flex: 1;
    min-height: 0;
    display: flex;
    align-items: flex-end;
`
const MapSvg = styled.svg`
    position: absolute;
    inset: 0;
    width: 100%;
    height: 100%;
`
const MAP_TEXT = {
    peak: css`
        font-size: 34px;
        font-style: italic;
        font-weight: 600;
        text-anchor: middle;
        fill: #5d5c2c;
        stroke: #e9ebd8;
        stroke-width: 6px;
    `,
    lake: css`
        font-size: 47px;
        font-style: italic;
        text-anchor: middle;
        fill: #6587a9;
    `,
    place: css`
        font-size: 32px;
        font-weight: 500;
        fill: #d7d9d4;
        stroke: #34383d;
        stroke-width: 9px;
    `,
    route: css`
        font-size: 36px;
        font-weight: 500;
        text-anchor: middle;
        fill: #d7d9d4;
        stroke: #34383d;
        stroke-width: 9px;
    `,
    contour: css`
        font-size: 26px;
        text-anchor: middle;
        fill: #66543f;
        stroke: #d9dfc9;
        stroke-width: 5px;
    `,
};
const MapText = styled.text`
    font-family: Roboto, 'Liberation Sans', sans-serif;
    paint-order: stroke;
    stroke-linejoin: round;
    ${(p) => MAP_TEXT[p.$kind]}
`
const MapButton = styled.button`
    position: absolute;
    top: 0;
    ${(p) => (p.$right ? 'right: 0;' : 'left: 0;')}
    display: grid;
    place-items: center;
    width: 36px;
    height: 36px;
    padding: 0;
    border: 0;
    border-radius: ${(p) => (p.$right ? '0 0 0 8px' : '0 0 8px 0')};
    background: #191a1d;
    color: #8b8d94;
`
const MapFooter = styled.footer`
    position: relative;
    flex: 1;
    display: flex;
    align-items: flex-end;
    justify-content: space-between;
    font-family: 'Liberation Sans', sans-serif;
`
const ScaleBar = styled.div`
    width: 73px;
    height: 22px;
    margin: 0 0 11px 10px;
    padding: 0 6px;
    border: 2px solid #333;
    border-top: 0;
    background: rgba(255, 255, 255, 0.75);
    color: #333;
    font: 10px/18px 'Noto Sans', sans-serif;
`
const MapLogo = styled.a`
    display: flex;
    align-items: center;
    gap: 2px;
    padding: 0 0 7px 8px;
    color: #fff;
    font: 700 18px/20px Lato, sans-serif;
    text-shadow: 0 0 2px #55594c, 0 0 2px #55594c;
`
const Attribution = styled.div`
    padding: 0 5px 0 1px;
    background: rgba(255, 255, 255, 0.5);
    color: #111;
    font-size: 12px;
    line-height: 20px;
    b { margin-left: 2px; }
`

export default App
